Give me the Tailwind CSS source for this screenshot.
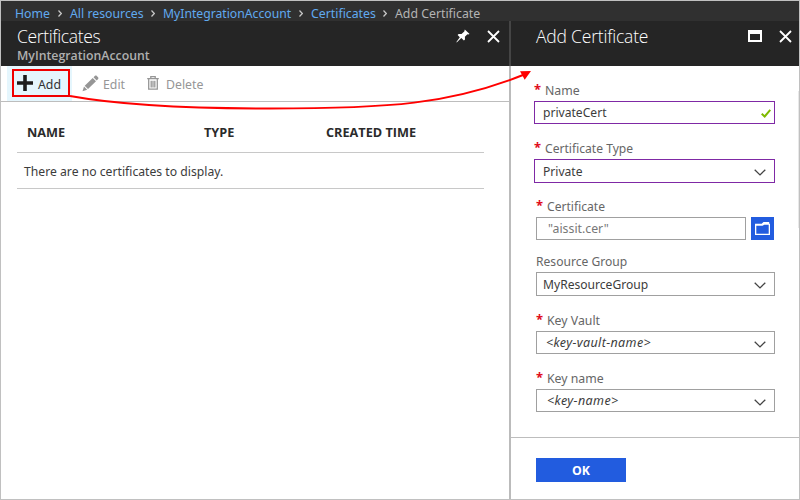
<!DOCTYPE html>
<html lang="en">
<head>
<meta charset="utf-8">
<title>Add Certificate</title>
<script src="https://cdn.jsdelivr.net/npm/@tailwindcss/browser@4"></script>
</head>
<body class="bg-white">
<div class="relative flex h-[500px] w-[800px] flex-col overflow-hidden border border-[#c0c0c0] bg-white font-['Noto_Sans','Open_Sans',sans-serif] text-[12.3px] leading-[18px] text-[#3c3c3c] whitespace-nowrap">

  <nav class="flex h-5 shrink-0 items-center bg-[#303030] pt-[5px] pl-[14px] text-[12.3px] text-[#60aaf0]">
    <span class="w-[43px]">Home</span>
    <svg class="mr-2 h-[7px] w-1" viewBox="0 0 4 7" fill="none" stroke="#c8c8c8" stroke-width="1.2"><path d="M.5.5l2.8 3-2.8 3"/></svg>
    <span class="w-[81px]">All resources</span>
    <svg class="mr-2 h-[7px] w-1" viewBox="0 0 4 7" fill="none" stroke="#c8c8c8" stroke-width="1.2"><path d="M.5.5l2.8 3-2.8 3"/></svg>
    <span class="w-[136px] text-[12.2px]">MyIntegrationAccount</span>
    <svg class="mr-2 h-[7px] w-1" viewBox="0 0 4 7" fill="none" stroke="#c8c8c8" stroke-width="1.2"><path d="M.5.5l2.8 3-2.8 3"/></svg>
    <span class="w-[72px]">Certificates</span>
    <svg class="mr-2 h-[7px] w-1" viewBox="0 0 4 7" fill="none" stroke="#c8c8c8" stroke-width="1.2"><path d="M.5.5l2.8 3-2.8 3"/></svg>
    <span class="text-[#b4b4b4]">Add Certificate</span>
  </nav>

  <div class="flex min-h-0 flex-1">
    <section class="flex w-[508px] flex-col">
      <header class="flex h-[45px] shrink-0 justify-between bg-[#252525] pr-[9px] pl-4">
        <div class="pt-[4px]">
          <h1 class="h-[22px] font-['Open_Sans'] text-[17.5px] leading-[22px] font-light tracking-[-0.35px] text-white">Certificates</h1>
          <p class="font-['Open_Sans'] text-[12.3px] leading-[18px] font-semibold text-[#b0b0b0]">MyIntegrationAccount</p>
        </div>
        <div class="flex pt-2">
          <svg class="mr-[17px] h-[14px] w-[14px]" viewBox="0 0 14 14" fill="#fff"><path d="M8.800.4l4.800 4.500-1.400.5-.8-.1-2.500 2.500.1 2.800-1.100 1-2.600-2.500L.7 13.400l-.3-.4 3.400-4.800L1.600 6l1-1.100 2.900.1 2.800-2.600z"/></svg>
          <svg class="mt-px h-[13px] w-[13px]" viewBox="0 0 13 13" fill="none" stroke="#fff" stroke-width="1.800"><path d="M1 1l11 11M12 1L1 12"/></svg>
        </div>
      </header>
      <div class="flex h-9 shrink-0 border-b border-[#bdbdbd] pl-[6px] text-[#969696]">
        <button class="flex h-[35px] w-[65px] bg-[#e5f6fd] pt-[3px] pl-[5px] text-[#333]">
          <span class="flex h-7 w-[58px] items-center border-2 border-[#f00000] pl-[3px]">
            <svg class="mr-[5px] h-4 w-4" viewBox="0 0 16 16" fill="#1d1d1d"><path d="M6.200 0h3.600v6.200H16v3.600H9.800V16H6.200V9.800H0V6.200h6.200z"/></svg><span class="pt-[3px]">Add</span>
          </span>
        </button>
        <button class="flex items-center pt-[2px] pl-[10px]">
          <svg class="mr-[4px] mb-[3px] h-[17px] w-[17px]" viewBox="0 0 17 17" fill="#969696"><path d="M.5 16.300L2 11.500l3.200 3.200zM2.700 10.700L10.700 3l3.300 3.200-8 7.800zM11.500 2.200L13 .8c.6-.5 1.200-.5 1.800.1l1.300 1.300c.5.600.5 1.200 0 1.700l-1.400 1.500z"/></svg>Edit
        </button>
        <button class="flex items-center pt-[2px] pl-[22px]">
          <svg class="mr-[7px] mb-[3px] h-[14px] w-[12px]" viewBox="0 0 12 14" fill="none" stroke="#969696" stroke-width="1.300"><path d="M.2 2.700h11.600M3.800 2.500V.7h4.400v1.800M1.700 3v10.200h8.600V3M4.200 4.800v6.700M6 4.800v6.700M7.800 4.800v6.700"/></svg><span>Delete</span>
        </button>
      </div>
      <div class="mt-[15px] ml-4 w-[467px]">
        <div class="flex h-9 items-center border-b border-[#c8c8c8] pb-[5px] pl-[10px] font-['Open_Sans'] text-[12.7px] font-bold text-[#2b2b2b]">
          <span class="w-[177px]">NAME</span><span class="w-[122px]">TYPE</span><span>CREATED TIME</span>
        </div>
        <div class="flex h-9 items-center border-b border-[#c8c8c8] pt-[3px] pl-[7px] text-[12.2px]">There are no certificates to display.</div>
      </div>
    </section>

    <div class="flex w-[2px] flex-col"><div class="h-[45px] bg-[#454545]"></div><div class="flex-1 bg-[#bbb]"></div></div>

    <section class="flex w-[288px] flex-col">
      <header class="flex h-[45px] shrink-0 justify-between bg-[#252525] pr-[7px] pl-[25px]">
        <h2 class="pt-[4px] font-['Open_Sans'] text-[17.5px] leading-[22px] font-light tracking-[-0.2px] text-white">Add Certificate</h2>
        <div class="flex pt-[9px]">
          <div class="mr-[17px] h-3 w-[14px] border-2 border-t-4 border-white"></div>
          <svg class="h-[13px] w-[13px]" viewBox="0 0 13 13" fill="none" stroke="#fff" stroke-width="1.800"><path d="M1 1l11 11M12 1L1 12"/></svg>
        </div>
      </header>

      <form class="flex h-[372px] shrink-0 flex-col border-b border-[#bdbdbd] pl-[25px] text-[#666]">
        <div class="mt-[15px] -ml-[2px]">
          <label class="flex h-5 pt-px"><span class="-mt-[2px] w-[11px] text-[13px] font-bold text-[#e00b1c]">*</span>Name</label>
          <div class="flex h-[23px] w-[241px] items-center justify-between border border-[#7f29a5] pr-[3px] pl-2 text-[#3c3c3c]"><span class="text-[12.1px]">privateCert</span>
            <svg class="mt-px h-[9px] w-[10px]" viewBox="0 0 10 9" fill="none" stroke="#7fba00" stroke-width="2"><path d="M.7 4.800l3 2.700L9.300.8"/></svg></div>
        </div>
        <div class="mt-[15px] -ml-[2px]">
          <label class="flex h-5 pt-px"><span class="-mt-[2px] w-[11px] text-[13px] font-bold text-[#e00b1c]">*</span><span class="text-[12.1px]">Certificate Type</span></label>
          <div class="flex h-6 w-[241px] items-center justify-between border border-[#7f29a5] pr-2 pl-2 text-[#3c3c3c]"><span class="pt-px text-[12.1px]">Private</span>
            <svg class="mt-[3px] h-[7px] w-[12px]" viewBox="0 0 12 7" fill="none" stroke="#444" stroke-width="1.300"><path d="M.7.7L6 5.900 11.300.7"/></svg></div>
        </div>
        <div class="mt-[14px]">
          <label class="flex h-5 pt-px"><span class="-mt-[2px] w-[11px] text-[13px] font-bold text-[#e00b1c]">*</span><span class="text-[12.1px]">Certificate</span></label>
          <div class="flex gap-[5px]">
            <div class="flex h-[23px] w-[210px] items-center border border-[#a0a0a0] pl-[11px] text-[#777]">"aissit.cer"</div>
            <button class="flex h-[23px] w-[23px] items-center justify-center bg-[#225cdf]">
              <svg class="h-[13px] w-[15px]" viewBox="0 0 15 13"><path fill="#fff" d="M0 1.800h6.700L8.500 0h5.700v1.800H15V13H0z"/><path fill="#225cdf" d="M1.300 3.800h6.200L9.300 2.800h4.400v8.900H1.300z"/></svg>
            </button>
          </div>
        </div>
        <div class="mt-3">
          <label class="flex h-5 pt-px text-[12.1px]">Resource Group</label>
          <div class="flex h-6 w-[239px] items-center justify-between border border-[#a0a0a0] pr-2 pl-[6px] text-[#3c3c3c]"><span class="pt-px text-[12.1px]">MyResourceGroup</span>
            <svg class="mt-[3px] h-[7px] w-[12px]" viewBox="0 0 12 7" fill="none" stroke="#444" stroke-width="1.300"><path d="M.7.7L6 5.900 11.300.7"/></svg></div>
        </div>
        <div class="mt-[15px]">
          <label class="flex h-5 pt-px"><span class="-mt-[2px] w-[11px] text-[13px] font-bold text-[#e00b1c]">*</span>Key Vault</label>
          <div class="flex h-[23px] w-[239px] items-center justify-between border border-[#a0a0a0] pr-2 pl-[9px] text-[#3c3c3c]"><span class="text-[12.5px] tracking-[0.38px] italic">&lt;key-vault-name&gt;</span>
            <svg class="mt-[3px] h-[7px] w-[12px]" viewBox="0 0 12 7" fill="none" stroke="#444" stroke-width="1.300"><path d="M.7.7L6 5.900 11.300.7"/></svg></div>
        </div>
        <div class="mt-[15px]">
          <label class="flex h-5 pt-px"><span class="-mt-[2px] w-[11px] text-[13px] font-bold text-[#e00b1c]">*</span>Key name</label>
          <div class="flex h-[23px] w-[239px] items-center justify-between border border-[#a0a0a0] pr-2 pl-[10px] text-[#3c3c3c]"><span class="text-[12.5px] tracking-[0.42px] italic">&lt;key-name&gt;</span>
            <svg class="mt-[3px] h-[7px] w-[12px]" viewBox="0 0 12 7" fill="none" stroke="#444" stroke-width="1.300"><path d="M.7.7L6 5.900 11.300.7"/></svg></div>
        </div>
      </form>
      <footer class="pt-5 pl-[25px]">
        <button class="block h-6 w-[90px] bg-[#225cdf] pt-px font-['Open_Sans'] text-[12.3px] font-bold text-white">OK</button>
      </footer>
    </section>
  </div>

  <!-- scroll track -->
  <div class="absolute top-[90px] right-0 h-[137px] w-px bg-[#e8e8e8]"></div>

  <!-- callout arrow from Add to the new blade -->
  <svg class="pointer-events-none absolute -top-px -left-px h-[500px] w-[800px]" viewBox="0 0 800 500"><path d="M70 96C125 106 210 108.500 270 108.500C390 108.500 450 104 523 75" fill="none" stroke="#f00" stroke-width="1.900"/><path d="M531 71l-11 .3 4.700 8.400z" fill="#f00"/></svg>
</div>
</body>
</html>
